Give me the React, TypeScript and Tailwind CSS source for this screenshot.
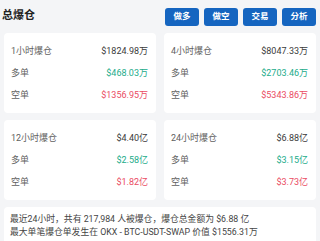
import { useMemo } from 'react'

interface Bucket {
  period: string
  total: string
  long: string
  short: string
}

const buckets: Bucket[] = [
  { period: '1小时爆仓', total: '$1824.98万', long: '$468.03万', short: '$1356.95万' },
  { period: '4小时爆仓', total: '$8047.33万', long: '$2703.46万', short: '$5343.86万' },
  { period: '12小时爆仓', total: '$4.40亿', long: '$2.58亿', short: '$1.82亿' },
  { period: '24小时爆仓', total: '$6.88亿', long: '$3.15亿', short: '$3.73亿' },
]

const actions = ['做多', '做空', '交易', '分析']

function StatCard({ bucket }: { bucket: Bucket }) {
  const rows = [
    { label: bucket.period, value: bucket.total, color: 'text-[#3a3a3a]' },
    { label: '多单', value: bucket.long, color: 'text-[#22ab8a]' },
    { label: '空单', value: bucket.short, color: 'text-[#ea4a62]' },
  ]
  return (
    <div className="h-[80px] rounded-[4px] bg-white pl-[7px] pr-[8px] pt-[8px]">
      {rows.map((row) => (
        <div key={row.label} className="flex h-[22px] items-center justify-between text-[9px]">
          <span className="text-[#5f5f5f]">{row.label}</span>
          <span className={row.color}>{row.value}</span>
        </div>
      ))}
    </div>
  )
}

export default function App() {
  const cards = useMemo(() => buckets, [])

  return (
    <div
      className="h-[241px] w-[320px] overflow-hidden bg-[#f4f5f7] px-1"
      style={{ fontFamily: 'Roboto, "Noto Sans CJK SC", sans-serif' }}
    >
      <div className="flex h-[28px] items-center justify-between pt-[5px]">
        <h1 className="-ml-[2px] text-[11px] font-bold text-[#222222]">总爆仓</h1>
        <div className="flex gap-[5px]">
          {actions.map((label) => (
            <button
              key={label}
              className="h-[18px] w-[34px] rounded-[3px] bg-[#1565c0] text-[8.5px] font-bold text-white"
            >
              {label}
            </button>
          ))}
        </div>
      </div>

      <div className="mt-[5px] grid grid-cols-2 gap-x-2 gap-y-[7px]">
        {cards.map((bucket) => (
          <StatCard key={bucket.period} bucket={bucket} />
        ))}
      </div>

      <div className="mt-[7px] h-[40px] rounded-[4px] bg-white px-[6px] pt-[6px] text-[8.8px] leading-[13px] text-[#444444]">
        <p>最近24小时，共有 217,984 人被爆仓，爆仓总金额为 $6.88 亿</p>
        <p>最大单笔爆仓单发生在 OKX - BTC-USDT-SWAP 价值 $1556.31万</p>
      </div>
    </div>
  )
}
